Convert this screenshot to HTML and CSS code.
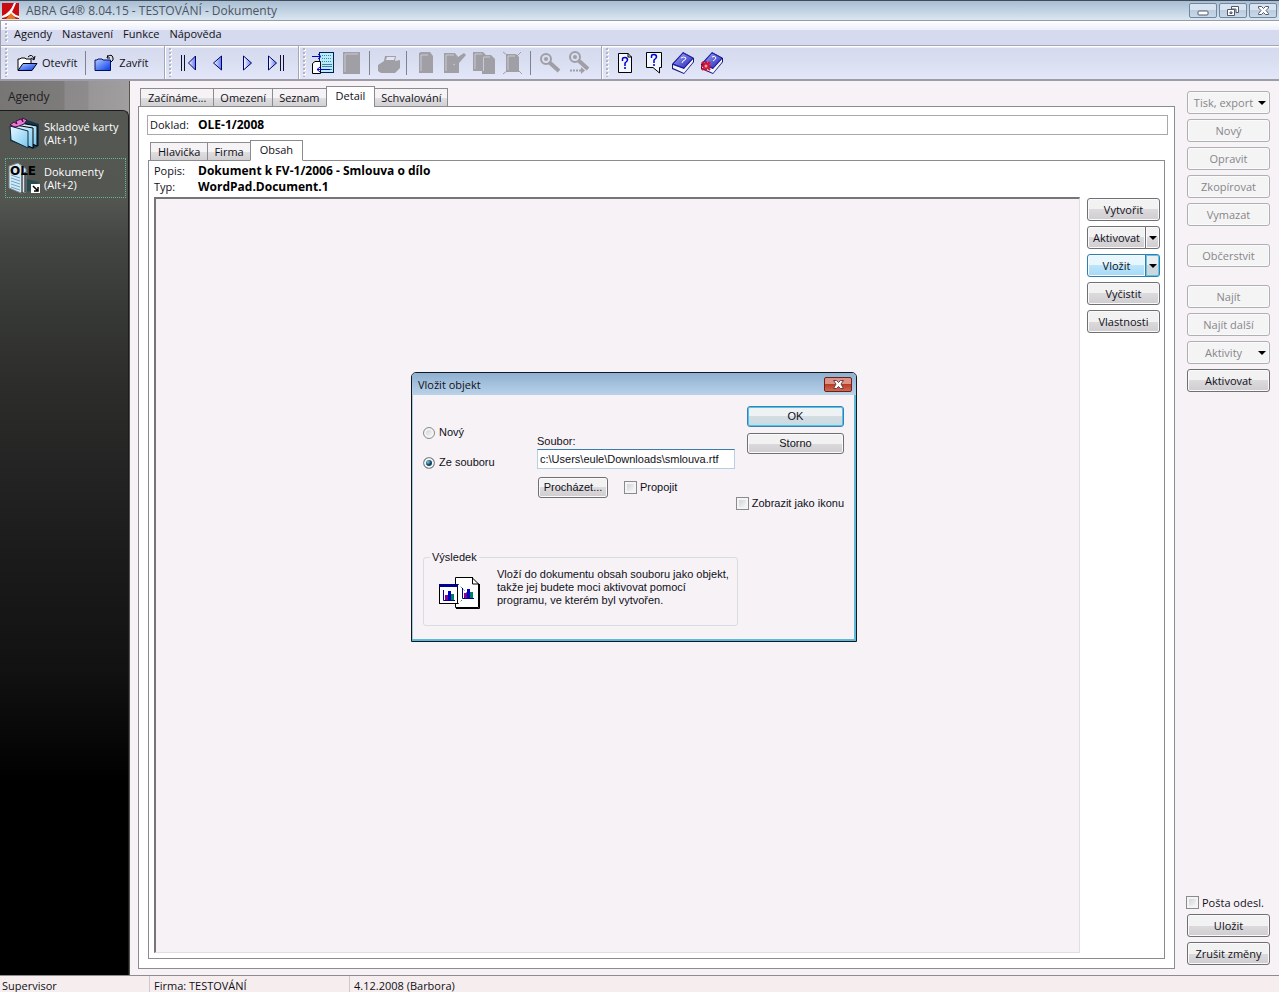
FILE: index.html
```html
<!DOCTYPE html>
<html lang="cs">
<head>
<meta charset="utf-8">
<title>ABRA G4 - Dokumenty</title>
<link rel="stylesheet" href="styles.css">
</head>
<body>
<svg class="defs" aria-hidden="true">
  <defs>
    <linearGradient id="blue" x1="0" y1="0" x2="1" y2="1"><stop offset="0" stop-color="#b8ccff"/><stop offset="1" stop-color="#0038e8"/></linearGradient>
    <linearGradient id="book" x1="0" y1="0" x2="1" y2="1"><stop offset="0" stop-color="#a8b0f4"/><stop offset="1" stop-color="#2020b8"/></linearGradient>
    <linearGradient id="nav" x1="0" y1="0" x2="1" y2="0"><stop offset="0" stop-color="#fff"/><stop offset="1" stop-color="#5878e8"/></linearGradient>
    <linearGradient id="ice" x1="0" y1="0" x2="1" y2="1"><stop offset="0" stop-color="#e8f8ff"/><stop offset="1" stop-color="#78c8f0"/></linearGradient>
  </defs>
</svg>
<header class="titlebar">
  <svg class="logo" width="17" height="16" viewBox="0 0 17 16"><rect width="17" height="16" fill="#c80c10"/><path d="M12 0H14Q12 5 10 9Q13 12 17 13V15Q12 14 9 11Q5 14 0 15V13Q8 10 12 0Z" fill="#fff"/><path d="M9 10L14 16H4Z" fill="#e87820"/></svg>
  <h1>ABRA G4® 8.04.15 - TESTOVÁNÍ - Dokumenty</h1>
  <div class="winbtns">
    <button aria-label="Minimalizovat"><svg width="12" height="12"><rect x="1" y="6" width="10" height="4" rx="1" fill="#fff" stroke="#50586a"/></svg></button>
    <button aria-label="Obnovit"><svg width="14" height="12"><path d="M5.500 1.500H12.500V7.500H10V4H5.500Z" fill="#fff" stroke="#50586a"/><path fill-rule="evenodd" d="M1.500 4.500H8.500V10.500H1.500ZM4 7V8.500H6V7Z" fill="#fff" stroke="#50586a"/></svg></button>
    <button aria-label="Zavřít okno"><svg width="13" height="12"><path d="M1.500 1.500H4.500L6.500 3.500L8.500 1.500H11.500V3L9 5.500L11.500 8.500V9.500H8.500L6.500 7.500L4.500 9.500H1.500V8.500L4 5.500L1.500 3Z" fill="#fff" stroke="#50586a"/></svg></button>
  </div>
</header>
<nav class="menubar">
  <i class="grip"></i>
  <button>Agendy</button><button>Nastavení</button><button>Funkce</button><button>Nápověda</button>
</nav>
<div class="toolbar">
  <div class="band">
    <i class="grip"></i>
    <button class="textual"><svg width="21" height="18"><path d="M1 16V5H3L4 4H8L9 5H14V9" fill="#fff" stroke="#000"/><path d="M6 9.500H20L15 16.500H1Z" fill="url(#blue)" stroke="#000020"/><path d="M11 3Q15 -1 17 5M14 4L17 6L18 2" fill="none" stroke="#000"/></svg>Otevřít</button>
    <i class="sep"></i>
    <button class="textual"><svg width="21" height="18"><path d="M1 16.500V6H3L4 5H8L9 6H16.500V16.500Z" fill="url(#blue)" stroke="#001060"/><path d="M14 1L13 4L16 4M13 3Q18 -1 19 4Q20 6 17 8" fill="none" stroke="#000"/></svg>Zavřít</button>
  </div>
  <div class="band nav">
    <i class="grip"></i>
    <button aria-label="První"><svg width="18" height="18"><path d="M1.500 1V17M4.500 1V17" stroke="#101030"/><path d="M15.500 2V16L8.500 9Z" fill="url(#nav)" stroke="#000070"/></svg></button>
    <button aria-label="Předchozí"><svg width="18" height="18"><path d="M12.500 2V16L4.500 9Z" fill="url(#nav)" stroke="#000070"/></svg></button>
    <button aria-label="Další"><svg width="18" height="18"><path d="M5.500 2V16L13.500 9Z" fill="url(#nav)" stroke="#000070"/></svg></button>
    <button aria-label="Poslední"><svg width="18" height="18"><path d="M16.500 1V17M13.500 1V17" stroke="#101030"/><path d="M1.500 2V16L9.500 9Z" fill="url(#nav)" stroke="#000070"/></svg></button>
  </div>
  <div class="band icons">
    <i class="grip"></i>
    <button aria-label="Přepnout"><svg width="24" height="24"><rect x="8.500" y="1.500" width="14" height="20" fill="#b8ecfa" stroke="#002050"/><path d="M11 4.500H21M11 7.500H21M11 10.500H21" stroke="#4880a0" stroke-dasharray="1 1"/><path d="M11 13.500H21M11 15.500H21M11 18.500H21" stroke="#4880a0"/><path d="M1.500 12.500L4 10.500H9.500V22.500H1.500Z" fill="#fff" stroke="#000"/><path d="M1 5.500H9M7 3L10 5.500L7 8M19 18.500H6M9 16L6 18.500L9 21" stroke="#0000d8" fill="none"/></svg></button>
    <button disabled aria-label="Karta"><svg width="24" height="24"><path d="M3 1H20V23H3Z" fill="#a09fa6"/><path d="M5 21V3H18" fill="none" stroke="#c9cad5"/></svg></button>
    <i class="sep"></i>
    <button disabled aria-label="Tisk"><svg width="24" height="24"><path d="M1 14L7 10L8 5H19L18 10L23 9V17L18 22H4L1 20Z" fill="#a09fa6"/><path d="M10 6H18L17 9H9Z" fill="#e3e4ef"/></svg></button>
    <i class="sep"></i>
    <button disabled aria-label="Nový"><svg width="24" height="24"><path d="M7 1H16L19 5V22H5V2Z" fill="#a09fa6"/><path d="M7 20V4H14" fill="none" stroke="#c9cad5"/></svg></button>
    <button disabled aria-label="Opravit"><svg width="24" height="24"><path d="M1 2H12L15 6L21 2L23 4L16 12V22H1Z" fill="#a09fa6"/><path d="M3 20V4H11M10 13L12 14" fill="none" stroke="#c9cad5"/></svg></button>
    <button disabled aria-label="Kopírovat"><svg width="24" height="24"><path d="M1 1H11L14 4H19L23 8V23H10V20H1Z" fill="#a09fa6"/><path d="M3 18V3H10M11.500 20V6H18" fill="none" stroke="#c9cad5"/></svg></button>
    <button disabled aria-label="Vymazat"><svg width="24" height="24"><path d="M5 3H15L18 6V21H5Z" fill="#a09fa6"/><path d="M2 1L6 4M20 1L16 5M2 23L6 20M21 23L17 19" stroke="#a09fa6"/><path d="M7 19V5H14" fill="none" stroke="#c9cad5"/></svg></button>
    <i class="sep"></i>
    <button disabled aria-label="Najít"><svg width="24" height="24"><circle cx="8" cy="8" r="5" fill="none" stroke="#a09fa6" stroke-width="2"/><circle cx="8" cy="8" r="2" fill="#a09fa6"/><path d="M11 11L21 20" stroke="#a09fa6" stroke-width="4"/></svg></button>
    <button disabled aria-label="Najít další"><svg width="24" height="24"><circle cx="8" cy="6" r="5" fill="none" stroke="#a09fa6" stroke-width="2"/><circle cx="8" cy="6" r="2" fill="#a09fa6"/><path d="M11 9L21 18" stroke="#a09fa6" stroke-width="4"/><path d="M3 19.500H14" stroke="#a09fa6" stroke-width="2" stroke-dasharray="2 1"/><path d="M14 16L18 19.500L14 23Z" fill="#a09fa6"/></svg></button>
  </div>
  <div class="band icons help">
    <i class="grip"></i>
    <button aria-label="Nápověda"><svg width="24" height="24"><path d="M5.500 2.500H15L18.500 6V21.500H5.500Z" fill="#f4f8ff" stroke="#000"/><path d="M15 2V6H19" fill="none" stroke="#000"/><path d="M9.500 10V8Q9.500 6.500 12 6.500Q14.500 6.500 14.500 9Q14.500 10 12 12V15M12 16V18" fill="none" stroke="#0000c8" stroke-width="1.500"/></svg></button>
    <button aria-label="Co je to"><svg width="24" height="24"><path d="M4.500 1.500H19.500V16.500H17.500V22L11 16.500H4.500Z" fill="#f4f8ff" stroke="#000"/><path d="M9.500 7V5Q9.500 3.500 12 3.500Q14.500 3.500 14.500 6Q14.500 7 12 9V12M12 13V15" fill="none" stroke="#0000c8" stroke-width="1.500"/></svg></button>
    <button aria-label="Příručka"><svg width="24" height="24"><path d="M1 13L12 1L23 7V11L13 23L1 18Z" fill="#18187c"/><path d="M2 14L13 18L22 8V11L13 22L2 17Z" fill="#f4f4ff"/><path d="M2 13L12 2L22 7L13 17Z" fill="url(#book)" stroke="#2020b0"/><path d="M10 7Q13 5 15 7Q15 9 12 10L11 12" stroke="#fff" fill="none"/></svg></button>
    <button aria-label="Poznámky"><svg width="24" height="24"><path d="M1 13L12 1L23 7V11L13 23L1 18Z" fill="#18187c"/><path d="M2 14L13 18L22 8V11L13 22L2 17Z" fill="#f4f4ff"/><path d="M2 13L12 2L22 7L13 17Z" fill="url(#book)" stroke="#2020b0"/><path d="M12 6Q15 4 16 7Q15 9 13 10" stroke="#fff" fill="none"/><path d="M6 10V20M1 15H11M2 11L10 19M2 19L10 11" stroke="#d81028" stroke-width="2"/><circle cx="6" cy="15" r="1.500" fill="#f8a0b0"/></svg></button>
  </div>
</div>
<div class="workspace">
  <aside class="sidebar">
    <h2>Agendy</h2>
    <div class="agendas">
      <a href="#karty"><svg width="32" height="34"><path d="M2 10L16 3L31 8V30L25 33L2 25Z" fill="#17344a"/><path d="M12 7L29 10V30L13 23Z" fill="url(#ice)" stroke="#000"/><path d="M7 9L25 12V32L8 25Z" fill="url(#ice)" stroke="#000"/><path d="M2 10L20 15V32L3 24Z" fill="url(#ice)" stroke="#102838"/><path d="M2 9L6 6L9 8L8 5L13 3L15 6L14 2L19 4L16 8L11 10L7 11Z" fill="#e878d8" stroke="#401040"/></svg><span>Skladové karty<br>(Alt+1)</span></a>
      <a href="#dokumenty" class="current"><svg width="32" height="34"><path d="M15 17L31 21L24 30L15 31Z" fill="#2c4b4e"/><path d="M1 5L10 2L18 8V31L13 32L1 27Z" fill="#d8e8f0" stroke="#78888c"/><path d="M14 12V32M17 11V31" stroke="#000"/><path d="M3 14L12 17M3 17L12 20M3 20L12 23M3 23L12 26M3 26L12 29" stroke="#60a8d8"/><text x="2" y="14" class="ole">OLE</text><rect x="23" y="23" width="9" height="9" fill="#fff"/><path d="M25 25L30 30M30 26V30H26" stroke="#000" fill="none" stroke-width="1.500"/></svg><span>Dokumenty<br>(Alt+2)</span></a>
    </div>
  </aside>
  <main class="content">
    <div class="tabs" role="tablist">
      <button role="tab">Začínáme...</button><button role="tab">Omezení</button><button role="tab">Seznam</button><button role="tab" aria-selected="true">Detail</button><button role="tab">Schvalování</button>
    </div>
    <section class="panel outer">
      <div class="record"><span>Doklad:</span><b>OLE-1/2008</b></div>
      <div class="tabs inner-tabs" role="tablist">
        <button role="tab">Hlavička</button><button role="tab">Firma</button><button role="tab" aria-selected="true">Obsah</button>
      </div>
      <section class="panel inner">
        <dl class="meta"><dt>Popis:</dt><dd>Dokument k FV-1/2006 - Smlouva o dílo</dd><dt>Typ:</dt><dd>WordPad.Document.1</dd></dl>
        <div class="objectrow">
          <div class="objectbox"></div>
          <div class="stack object-actions">
            <button class="btn">Vytvořit</button>
            <div class="split"><button class="btn">Aktivovat</button><button class="btn drop" aria-label="Volby aktivace"><i class="arrow"></i></button></div>
            <div class="split hot"><button class="btn">Vložit</button><button class="btn drop" aria-label="Volby vložení"><i class="arrow"></i></button></div>
            <button class="btn">Vyčistit</button>
            <button class="btn">Vlastnosti</button>
          </div>
        </div>
      </section>
    </section>
  </main>
  <aside class="actions">
    <div class="stack">
      <button class="btn menu" disabled><span>Tisk, export</span><i class="arrow"></i></button>
      <button class="btn" disabled>Nový</button>
      <button class="btn" disabled>Opravit</button>
      <button class="btn" disabled>Zkopírovat</button>
      <button class="btn" disabled>Vymazat</button>
    </div>
    <button class="btn" disabled>Občerstvit</button>
    <div class="stack">
      <button class="btn" disabled>Najít</button>
      <button class="btn" disabled>Najít další</button>
      <button class="btn menu" disabled><span>Aktivity</span><i class="arrow"></i></button>
      <button class="btn">Aktivovat</button>
    </div>
    <div class="stack bottom">
      <label class="check"><input type="checkbox">Pošta odesl.</label>
      <button class="btn">Uložit</button>
      <button class="btn">Zrušit změny</button>
    </div>
  </aside>
</div>
<footer class="status"><span>Supervisor</span><span>Firma: TESTOVÁNÍ</span><span>4.12.2008 (Barbora)</span></footer>

<div class="dialog" role="dialog" aria-labelledby="dlg">
  <div class="dialog-title"><h2 id="dlg">Vložit objekt</h2><button aria-label="Zavřít dialog"><svg width="13" height="11"><path d="M1.500 1.500H4.500L6.500 3.500L8.500 1.500H11.500L9 5L11.500 9.500H8.500L6.500 7.500L4.500 9.500H1.500L4 5Z" fill="#fff" stroke="#684048"/></svg></button></div>
  <div class="dialog-body">
    <div class="choices">
      <label class="check"><input type="radio" name="src">Nový</label>
      <label class="check"><input type="radio" name="src" checked>Ze souboru</label>
    </div>
    <div class="file">
      <label for="file">Soubor:</label>
      <input id="file" type="text" value="c:\Users\eule\Downloads\smlouva.rtf">
      <div class="filerow"><button class="btn">Procházet...</button><label class="check"><input type="checkbox">Propojit</label></div>
    </div>
    <div class="confirm">
      <button class="btn default">OK</button>
      <button class="btn">Storno</button>
      <label class="check"><input type="checkbox">Zobrazit jako ikonu</label>
    </div>
    <fieldset class="result">
      <legend>Výsledek</legend>
      <svg width="42" height="34"><path d="M17.500 1.500H34L40.500 8V31.500H17.500Z" fill="#fff" stroke="#000"/><path d="M41.500 8V32.500H18M34.500 1V8H41" fill="none" stroke="#000"/><rect x="1.500" y="8.500" width="18" height="19" fill="#fff" stroke="#000"/><rect x="1" y="8" width="19" height="3" fill="#000090"/><path d="M5.500 14V24.500H17M24.500 12V22.500H36" fill="none" stroke="#000090"/><path d="M7 19H10V24H7ZM26 17H29V22H26Z" fill="#900090"/><path d="M10 15H13V24H10ZM29 13H32V22H29Z" fill="#0000c8"/><path d="M13 18H16V24H13ZM32 16H35V22H32Z" fill="#008060"/><path d="M20 8L29 17M20 28L29 19" stroke="#000" stroke-dasharray="1 3"/></svg>
      <p>Vloží do dokumentu obsah souboru jako objekt,<br>takže jej budete moci aktivovat pomocí<br>programu, ve kterém byl vytvořen.</p>
    </fieldset>
  </div>
</div>
</body>
</html>
```
FILE: styles.css
```css
* { box-sizing: border-box; }
body {
  margin: 0;
  min-height: 100vh;
  display: grid;
  grid-template-rows: 21px 25px 35px 1fr 17px;
  position: relative;
  background: #f6f2f6;
  color: #101018;
  font: 11px/13px "Open Sans", "Noto Sans", sans-serif;
}
button, input { font: inherit; color: inherit; }
button { margin: 0; padding: 0; border: 0; background: none; }
h1, h2, p, dl, dd { margin: 0; font-size: inherit; font-weight: normal; }
svg { display: block; flex: none; }
.defs { position: absolute; width: 0; height: 0; }

.titlebar {
  display: flex;
  align-items: center;
  gap: 7px;
  padding: 0 2px;
  border-top: 1px solid #424b58;
  border-bottom: 1px solid #989ba5;
  background: linear-gradient(#a9bed3, #d9e6f2);
}
.titlebar h1 { flex: 1; color: #4c5562; font-size: 12px; line-height: 18px; }
.winbtns { display: flex; gap: 2px; }
.winbtns button {
  display: grid;
  place-items: center;
  width: 28px;
  height: 15px;
  border: 1px solid #7186a0;
  border-radius: 2px;
  background: linear-gradient(#d7e3f0 50%, #bccde0 50%, #c8d8e8);
}

.grip {
  flex: none;
  width: 4px;
  margin: 2px 0;
  background:
    conic-gradient(from 270deg at 2px 2px, #b2b4c4 90deg, transparent 90deg) 0 0 / 4px 4px,
    conic-gradient(from 270deg at 2px 2px, #fff 90deg, transparent 90deg) 1px 1px / 4px 4px;
}
.menubar {
  display: flex;
  gap: 10px;
  padding: 0 4px;
  border-left: 1px solid #989ba5;
  border-bottom: 1px solid #a4a7b5;
  background: linear-gradient(#fff, #eceefa 9px, #d6daee 9px);
}
.menubar .grip { margin-right: -5px; }

.toolbar {
  display: flex;
  background: linear-gradient(#fff 1px, #d5daee 2px, #d9def1 16px, #e4e7fa);
  border-bottom: 2px solid #9d9da7;
  border-left: 1px solid #989ba5;
}
.band { display: flex; align-items: center; padding: 0 2px 0 4px; border-right: 1px solid #a4a7b5; box-shadow: 1px 0 #fff; }
.band .grip { align-self: stretch; }
.band:last-child { border: 0; box-shadow: none; }
.textual { display: flex; align-items: center; gap: 4px; padding: 0 8px; }
.band:first-child { width: 164px; }
.sep { width: 1px; height: 24px; background: #80828f; }
.nav { width: 134px; }
.nav button { padding: 0 6px 0 5px; }
.nav .grip { margin-right: 2px; }
.icons .grip { margin-right: 4px; }
.icons { width: 303px; }
.icons button { margin-right: 5px; }
.icons .sep { margin: 0 7px 0 0; }
.help { width: auto; }
.help .grip { margin-right: 3px; }

.workspace { display: grid; grid-template-columns: 130px minmax(0, 1fr) 104px; }

.sidebar {
  display: flex;
  flex-direction: column;
  border-right: 1px solid #55544f;
  background: linear-gradient(90deg, #777675, #7d7c7b 64px, #8b8989 65px, #8d8b8b 88px, #989696 89px, #a09e9e);
  color: #fff;
}
.sidebar h2 { padding: 9px 8px 7px; color: #20201f; font-size: 12px; }
.agendas {
  flex: 1;
  display: flex;
  flex-direction: column;
  gap: 5px;
  padding: 2px 2px 2px 5px;
  border: solid #1b1c1b;
  border-width: 1px 1px 0 0;
  border-radius: 0 6px 0 0;
  background: linear-gradient(#555753, #545652 10%, #444643 15%, #383a37 22%, #2c2d2b 32%, #1b1c1b 50%, #101110 65%, #000 78%);
}
.agendas a {
  display: flex;
  align-items: center;
  gap: 4px;
  height: 40px;
  padding: 0 2px;
  border: 1px solid transparent;
  color: #fff;
  text-decoration: none;
}
.agendas .current { border: 1px dotted #62b795; }
.ole { font: bold 12px "DejaVu Sans", sans-serif; }

.content { display: flex; flex-direction: column; padding: 5px 0 6px 8px; }
.tabs { display: flex; align-items: flex-end; padding: 0 2px; height: 21px; margin-bottom: -1px; position: relative; }
.tabs button {
  height: 19px;
  padding: 0 6px;
  margin-left: -1px;
  border: 1px solid #8b8b90;
  background: linear-gradient(#f5f3f5 50%, #e0dfe1 50%, #d2d0d2);
}
.tabs button:first-child { margin-left: 0; padding: 0 7px; }
.tabs button[aria-selected="true"] { height: 21px; padding: 0 9px 3px; border-bottom-color: #fff; background: #fff; }
.panel { display: flex; flex-direction: column; flex: 1; border: 1px solid #8b8b90; background: #fff; }
.outer { padding: 8px 9px 9px 9px; }
.record { display: grid; grid-template-columns: 48px 1fr; height: 20px; margin: 0 -3px 5px -1px; padding: 2px; border: 1px solid #a9a9ac; }
b, dd { font: bold 12px/13px "Open Sans", "Noto Sans", sans-serif; color: #000; }
.inner { padding: 3px 4px 5px 5px; }
.meta { display: grid; grid-template-columns: 44px 1fr; line-height: 13px; row-gap: 3px; margin-bottom: 4px; }
.objectrow { flex: 1; display: flex; gap: 7px; }
.objectbox { flex: 1; border: solid #e2dfe3; border-width: 2px 1px 1px 2px; border-top-color: #77747a; border-left-color: #77747a; background: #f6f2f6; }
.stack { display: flex; flex-direction: column; gap: 5px; }
.object-actions { width: 73px; padding-top: 1px; }

.btn {
  height: 23px;
  border: 1px solid #707074;
  border-radius: 3px;
  box-shadow: inset 0 0 0 1px #fbfafb;
  background: linear-gradient(#f3f2f3 50%, #dcdadd 50%, #cfcdd0);
  text-align: center;
  white-space: nowrap;
}
.btn:disabled { border-color: #aeb0b3; background: #f5f4f5; color: #85868a; }
.split { display: flex; }
.split .btn { flex: 1; border-radius: 3px 0 0 3px; }
.split .drop { flex: none; width: 15px; margin-left: -1px; border-radius: 0 3px 3px 0; display: grid; place-items: center; }
.arrow { border: 4px solid transparent; border-top-color: #000; border-bottom: 0; }
.hot .btn { border-color: #2d7fae; background: linear-gradient(#e8f6fd 50%, #bce5fb 50%, #a4d9f6); }
.hot .drop { background: linear-gradient(#e9eef1 50%, #ccd8de 50%); box-shadow: inset 0 0 0 1px #65c3e6; }
.menu { display: flex; align-items: center; padding: 0 3px 0 1px; }
.menu span { flex: 1; }

.actions { display: flex; flex-direction: column; gap: 18px; padding: 10px 9px 10px 12px; }
.bottom { margin-top: auto; }
.check { display: flex; align-items: center; gap: 3px; white-space: nowrap; }
.actions .check { margin-left: -1px; }
.check input {
  appearance: none;
  flex: none;
  width: 13px;
  height: 13px;
  margin: 0;
  border: 1px solid #8a8b8e;
  background: linear-gradient(135deg, #c9cbce, #fff);
  box-shadow: inset 0 0 0 2px #f4f4f4;
}
.check input[type="radio"] { width: 12px; height: 12px; border-radius: 50%; }
.check input[type="radio"]:checked { background: radial-gradient(circle at 40% 40%, #7fd0ea, #12405e 3px); }

.status { display: grid; grid-template-columns: 149px 200px 1fr; border-top: 1px solid #8f8b8f; background: #f6eeee; line-height: 19px; }
.status span { padding-left: 4px; border-left: 1px solid #d0c8c8; overflow: hidden; }
.status span:first-child { padding-left: 2px; border: 0; }

.dialog {
  position: absolute;
  left: 411px;
  top: 372px;
  width: 446px;
  border: 1px solid #101820;
  border-radius: 5px 5px 0 0;
  box-shadow: inset -2px -2px #5cbbd8, inset 1px 0 #a5c6dd;
  background: #f6f2f6;
  font-family: "Liberation Sans", Arial, sans-serif;
}
.dialog-title { display: flex; align-items: center; justify-content: space-between; height: 22px; padding: 0 4px 0 6px; border-radius: 4px 4px 0 0; background: linear-gradient(#8fb0d0, #b9d2ea); }
.dialog-title h2 { font-family: "Open Sans", "Noto Sans", sans-serif; }
.dialog-title button { display: grid; place-items: center; width: 28px; height: 15px; border: 1px solid #6d1f1b; border-radius: 2px; background: linear-gradient(#dc9284 50%, #b93c26 50%, #d06a50); }
.dialog-body { display: grid; grid-template-columns: 114px minmax(0, 1fr) 106px; padding: 11px 12px 15px 11px; }
.choices { display: flex; flex-direction: column; gap: 17px; padding-top: 20px; }
.choices .check { gap: 4px; }
.file { padding: 29px 3px 0 0; }
.file > label { display: block; height: 14px; }
.file input[type="text"] { display: block; width: 100%; height: 20px; padding: 0 2px; border: 1px solid #b5cfe7; border-top-color: #3d7bad; background: #fff; }
.filerow { display: flex; align-items: center; gap: 16px; margin: 8px 0 0 1px; }
.dialog .btn { height: 21px; }
.filerow .btn { width: 70px; }
.confirm { display: flex; flex-direction: column; align-items: flex-end; gap: 6px; }
.confirm .btn { width: 97px; }
.confirm .check { margin-top: 37px; }
.dialog .default { border-color: #3c7fb1; box-shadow: inset 0 0 0 1px #48c8ee; background: linear-gradient(#eef2f4 50%, #d3dee3 50%, #cbd9de); }
.result { grid-column: 1 / 3; display: flex; gap: 17px; min-width: 0; height: 75px; margin: 41px 0 0; padding: 4px 0 0 14px; border: 1px solid #d8dce2; border-radius: 3px; }
.result legend { margin-left: -8px; padding: 0 2px; }
.result svg { margin-top: 8px; }
.result p { white-space: nowrap; }
```
